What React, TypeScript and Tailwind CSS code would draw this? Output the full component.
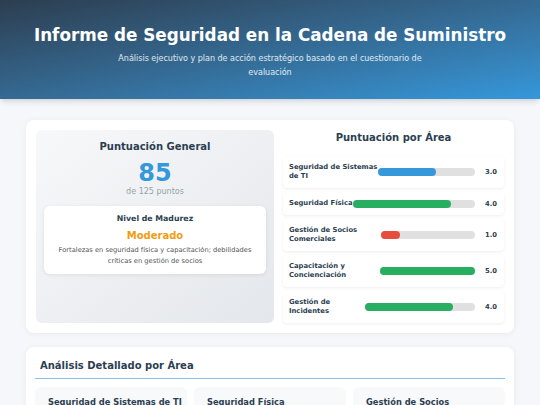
const areas = [
  { name: "Seguridad de Sistemas de TI", score: 3, color: "bg-[#3498db]" },
  { name: "Seguridad Física", score: 4, color: "bg-[#27ae60]" },
  { name: "Gestión de Socios Comerciales", score: 1, color: "bg-[#e74c3c]" },
  { name: "Capacitación y Concienciación", score: 5, color: "bg-[#27ae60]" },
  { name: "Gestión de Incidentes", score: 4, color: "bg-[#27ae60]" },
];

const detailCards = ["Seguridad de Sistemas de TI", "Seguridad Física", "Gestión de Socios"];

const App = () => {
  return (
    <div
      className="min-h-screen bg-[#f5f7fa] text-[#2c3e50]"
      style={{ fontFamily: '"DejaVu Sans", Verdana, sans-serif' }}
    >
      {/* Header */}
      <header className="h-[99px] bg-gradient-to-br from-[#2c3e50] to-[#3498db] text-white text-center pt-[23px] shadow-md">
        <h1 className="text-[16.8px] font-bold leading-[24px]">Informe de Seguridad en la Cadena de Suministro</h1>
        <p className="mx-auto mt-[5px] max-w-[322px] text-[8px] leading-[14px] text-white/85">
          Análisis ejecutivo y plan de acción estratégico basado en el cuestionario de evaluación
        </p>
      </header>

      <main className="px-[26px] pt-[21px]">
        {/* Summary card */}
        <section className="bg-white rounded-lg shadow-[0_1px_6px_rgba(0,0,0,0.06)] p-[10px] grid grid-cols-[238px_1fr] gap-[9px]">
          <div className="rounded-md bg-gradient-to-br from-[#f7f8fa] to-[#e4e7eb] px-[8px] pt-[10px] pb-[10px] h-[193px]">
            <h2 className="text-center text-[10px] font-bold leading-[14px]">Puntuación General</h2>
            <div className="text-center text-[24px] font-bold text-[#3498db] leading-[28px] mt-[5px]">85</div>
            <div className="text-center text-[8px] text-[#95a5a6] leading-[10px]">de 125 puntos</div>
            <div className="mt-[9px] bg-white rounded-md shadow-[0_1px_4px_rgba(0,0,0,0.08)] px-[8px] pt-[7px] pb-[8px] text-center">
              <h3 className="text-[7.8px] font-bold leading-[11px]">Nivel de Madurez</h3>
              <div className="text-[10px] font-bold text-[#f39c12] leading-[16px] mt-[4px]">Moderado</div>
              <p className="text-[6.7px] text-[#555] leading-[10.5px] mt-[1px]">
                Fortalezas en seguridad física y capacitación; debilidades críticas en gestión de socios
              </p>
            </div>
          </div>

          <div>
            <h2 className="text-center text-[10px] font-bold leading-[14px] mt-[1px] mb-[11px]">Puntuación por Área</h2>
            <div className="flex flex-col gap-[4px]">
              {areas.map((a) => (
                <div
                  key={a.name}
                  className="flex items-center bg-white rounded-[4px] shadow-[0_1px_3px_rgba(0,0,0,0.07)] pl-[6px] pr-[7px] py-[6.5px]"
                >
                  <div className="text-[6.8px] font-bold leading-[9.5px]">{a.name}</div>
                  <div className="basis-[120px] grow h-[8px] rounded-full bg-[#e0e0e0]">
                    <div className={`h-full rounded-full ${a.color}`} style={{ width: `${(a.score / 5) * 100}%` }} />
                  </div>
                  <div className="w-[22px] shrink-0 text-right text-[6.8px] font-bold">{a.score.toFixed(1)}</div>
                </div>
              ))}
            </div>
          </div>
        </section>

        {/* Detailed analysis */}
        <section className="mt-[14px] bg-white rounded-lg shadow-[0_1px_6px_rgba(0,0,0,0.06)] px-[9px] pt-[12px] pb-[12px]">
          <h2 className="text-[10px] font-bold leading-[14px] px-[5px] pb-[5px] border-b-[1.5px] border-[#85c1e9]">
            Análisis Detallado por Área
          </h2>
          <div className="mt-[8px] grid grid-cols-3 gap-[7px]">
            {detailCards.map((t) => (
              <div key={t} className="bg-[#f8f9fa] rounded-md pl-[13px] pr-[2px] pt-[10px] pb-[40px]">
                <h3 className="text-[8.3px] font-bold leading-[11px] whitespace-nowrap">{t}</h3>
              </div>
            ))}
          </div>
        </section>
      </main>
    </div>
  );
};

export default App;
